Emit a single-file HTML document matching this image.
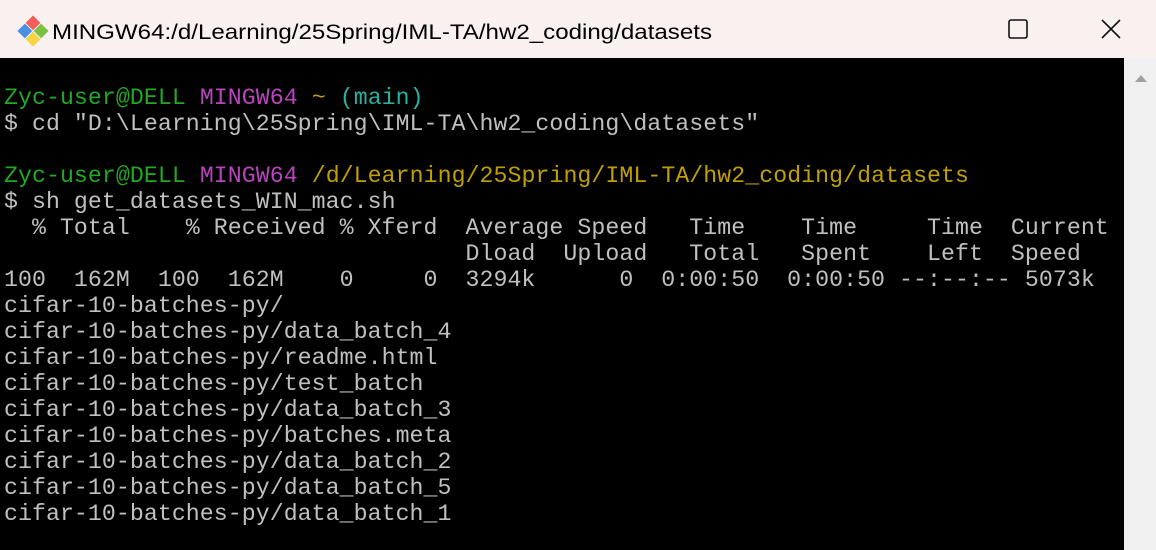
<!DOCTYPE html>
<html><head><style>
html,body{margin:0;padding:0;width:1156px;height:550px;overflow:hidden;background:#000}
#title{position:absolute;left:0;top:0;width:1156px;height:58px;background:#f8f1ef}
#term{position:absolute;left:0;top:58px;width:1124px;height:492px;background:#000}
#sb{position:absolute;left:1124px;top:58px;width:32px;height:492px;background:#f0f0f0}
pre{position:absolute;left:4px;top:85px;margin:0;font-family:"Liberation Mono",monospace;font-size:23.2px;letter-spacing:0.07px;line-height:26px;color:#c0c0c0;white-space:pre}
.g{color:#22a822}.p{color:#b944bd}.y{color:#c0a000}
</style></head><body>
<div id="title">
<svg width="1156" height="58" style="position:absolute;left:0;top:0">
 <g transform="translate(33,31) rotate(45)">
  <rect x="-11" y="-11" width="10.5" height="10.5" fill="#f25c5c"/>
  <rect x="0.5" y="-11" width="10.5" height="10.5" fill="#7dc142"/>
  <rect x="-11" y="0.5" width="10.5" height="10.5" fill="#4a90e2"/>
  <rect x="0.5" y="0.5" width="10.5" height="10.5" fill="#f5d342"/>
 </g>
 <text x="52" y="39" font-family="Liberation Sans, sans-serif" font-size="21" fill="#000" textLength="660" lengthAdjust="spacingAndGlyphs">MINGW64:/d/Learning/25Spring/IML-TA/hw2_coding/datasets</text>
 <rect x="1009" y="20" width="18" height="18" rx="2" fill="none" stroke="#111" stroke-width="1.6"/>
 <path d="M1102 20 L1120 38 M1120 20 L1102 38" stroke="#111" stroke-width="1.6"/>
</svg>
</div>
<div id="term"></div>
<div id="sb"><svg width="32" height="40"><path d="M11 24 L17 17 L23 24 Z" fill="#a0a0a0"/></svg></div>
<pre><span class="g">Zyc-user@DELL</span> <span class="p">MINGW64</span> <span class="y">~</span> <span style="color:#2ab0a0">(main)</span>
$ cd "D:\Learning\25Spring\IML-TA\hw2_coding\datasets"

<span class="g">Zyc-user@DELL</span> <span class="p">MINGW64</span> <span class="y">/d/Learning/25Spring/IML-TA/hw2_coding/datasets</span>
$ sh get_datasets_WIN_mac.sh
  % Total    % Received % Xferd  Average Speed   Time    Time     Time  Current
                                 Dload  Upload   Total   Spent    Left  Speed
100  162M  100  162M    0     0  3294k      0  0:00:50  0:00:50 --:--:-- 5073k
cifar-10-batches-py/
cifar-10-batches-py/data_batch_4
cifar-10-batches-py/readme.html
cifar-10-batches-py/test_batch
cifar-10-batches-py/data_batch_3
cifar-10-batches-py/batches.meta
cifar-10-batches-py/data_batch_2
cifar-10-batches-py/data_batch_5
cifar-10-batches-py/data_batch_1</pre>
</body></html>
